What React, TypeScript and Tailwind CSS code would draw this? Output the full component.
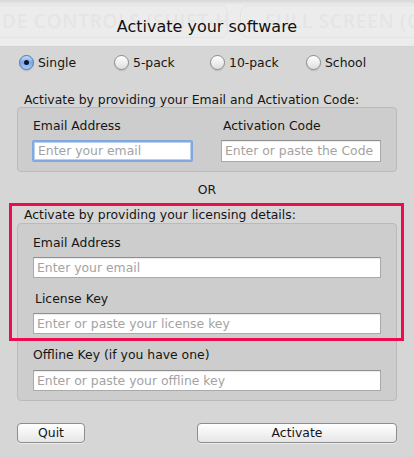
import React from "react";

/** Nút radio kiểu Aqua */
function Radio({ label, checked, width }: { label: string; checked?: boolean; width: string }) {
  return (
    <div className={`flex items-center gap-[4px] h-[15px] ${width}`}>
      {checked ? (
        <span className="flex items-center justify-center w-[15px] h-[15px] rounded-full border border-[#5277ad] bg-gradient-to-b from-[#c6dcf7] via-[#77a9e8] to-[#a9cdf5] shadow-[0_1px_1px_rgba(0,0,0,0.15)]">
          <span className="w-[5px] h-[5px] rounded-full bg-[#15162a]" />
        </span>
      ) : (
        <span className="w-[15px] h-[15px] rounded-full border border-[#8c8c8c] bg-gradient-to-b from-[#ffffff] to-[#dedede] shadow-[0_1px_1px_rgba(0,0,0,0.12)]" />
      )}
      <span className="leading-[15px]">{label}</span>
    </div>
  );
}

/** Ô nhập */
function Field({ placeholder, focused, className = "" }: { placeholder: string; focused?: boolean; className?: string }) {
  return (
    <div
      className={`flex items-center bg-white ${
        focused
          ? "border-2 border-[#82a9df] rounded-[2px] pl-[4px] shadow-[inset_0_0_0_1px_#b9d0f0]"
          : "border border-[#a9a9a9] border-t-[#8f8f8f] pl-[3px] shadow-[inset_0_1px_1px_rgba(0,0,0,0.08)]"
      } ${className}`}
    >
      <span className="text-[#a3a3a3] leading-[14px] whitespace-nowrap">{placeholder}</span>
    </div>
  );
}

function Label({ children, className = "" }: { children: React.ReactNode; className?: string }) {
  return <div className={`leading-[14px] ${className}`}>{children}</div>;
}

export default function App() {
  return (
    <div className="relative w-[414px] h-[457px] overflow-hidden bg-[#d6d6d6] text-[#151515] text-[12.4px] font-['DejaVu_Sans','Liberation_Sans',sans-serif]">
      {/** Top band with ghosted toolbar */}
      <div className="relative h-[47px] bg-[#ececec] border-b border-[#d2d2d2] overflow-hidden">
        <div className="absolute inset-x-0 top-0 h-[5px] bg-gradient-to-b from-[#d8d8d8] to-[#ececec]" />
        <div className="flex gap-[12px] pt-[5px] font-['Open_Sans',sans-serif] font-semibold text-[19px] text-[#e5e5e5] tracking-[0.8px]">
          <div className="w-[238px] -ml-[10px] h-[33px] shrink-0 rounded-[8px] border border-[#e4e4e4] flex items-center pl-[11px] whitespace-nowrap overflow-hidden">
            DE CONTROLS (SHIFT-H)
          </div>
          <div className="flex-1 h-[33px] rounded-[8px] border border-[#e4e4e4] flex items-center pl-[24px] whitespace-nowrap overflow-hidden -mr-[20px]">
            FULL SCREEN (CMD-F)
          </div>
        </div>
        <div className="absolute inset-x-0 top-[17px] text-center text-[16px] leading-[19px] text-[#111]">
          Activate your software
        </div>
      </div>

      {/** License type */}
      <div className="flex pl-[19px] mt-[8px]">
        <Radio label="Single" checked width="w-[95px]" />
        <Radio label="5-pack" width="w-[96px]" />
        <Radio label="10-pack" width="w-[96px]" />
        <Radio label="School" width="w-[96px]" />
      </div>

      {/** Email + Activation Code */}
      <Label className="ml-[24px] mt-[23px]">Activate by providing your Email and Activation Code:</Label>
      <div className="ml-[17px] w-[380px] rounded-[4px] border border-[#bababa] bg-[#cdcdcd] pl-[14px] pt-[11px] pb-[9px] flex">
        <div className="w-[189px]">
          <Label className="ml-[1px]">Email Address</Label>
          <Field placeholder="Enter your email" focused className="mt-[7px] w-[161px] h-[22px]" />
        </div>
        <div>
          <Label className="ml-[2px]">Activation Code</Label>
          <Field placeholder="Enter or paste the Code" className="mt-[7px] w-[160px] h-[22px]" />
        </div>
      </div>

      <Label className="mt-[11px] text-center">OR</Label>

      {/** Licensing details */}
      <Label className="ml-[24px] mt-[11px]">Activate by providing your licensing details:</Label>
      <div className="ml-[17px] mt-[1px] w-[380px] rounded-[4px] border border-[#bababa] bg-[#cdcdcd] px-[15px] pt-[12px] pb-[9px]">
        <Label>Email Address</Label>
        <Field placeholder="Enter your email" className="mt-[7px] h-[21px]" />
        <Label className="mt-[14px] ml-[2px]">License Key</Label>
        <Field placeholder="Enter or paste your license key" className="mt-[7px] h-[21px]" />
        <Label className="mt-[14px]">Offline Key (if you have one)</Label>
        <Field placeholder="Enter or paste your offline key" className="mt-[8px] h-[21px]" />
      </div>

      {/** Buttons */}
      <div className="flex mt-[22px] pl-[17px]">
        <button className="w-[68px] h-[20px] rounded-[4px] border border-[#8d8d8d] bg-gradient-to-b from-white to-[#e6e6e6] leading-[18px] shadow-[0_1px_0_rgba(255,255,255,0.5)]">
          Quit
        </button>
        <button className="ml-[112px] w-[200px] h-[20px] rounded-[4px] border border-[#8d8d8d] bg-gradient-to-b from-white to-[#e6e6e6] leading-[18px] shadow-[0_1px_0_rgba(255,255,255,0.5)]">
          Activate
        </button>
      </div>

      {/** Annotation highlight */}
      <div className="absolute left-[9px] top-[203px] w-[395px] h-[138px] border-[3px] border-[#ec0c4f] pointer-events-none" />
    </div>
  );
}
